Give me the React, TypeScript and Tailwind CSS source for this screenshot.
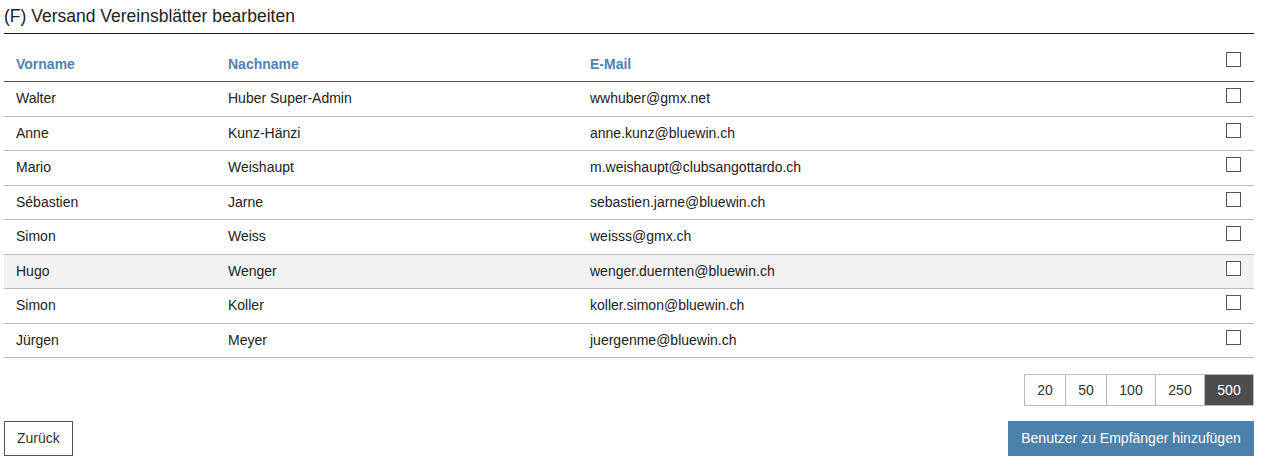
import React from 'react';

const rows = [
  { first: 'Walter', last: 'Huber Super-Admin', mail: 'wwhuber@gmx.net' },
  { first: 'Anne', last: 'Kunz-Hänzi', mail: 'anne.kunz@bluewin.ch' },
  { first: 'Mario', last: 'Weishaupt', mail: 'm.weishaupt@clubsangottardo.ch' },
  { first: 'Sébastien', last: 'Jarne', mail: 'sebastien.jarne@bluewin.ch' },
  { first: 'Simon', last: 'Weiss', mail: 'weisss@gmx.ch' },
  { first: 'Hugo', last: 'Wenger', mail: 'wenger.duernten@bluewin.ch', hover: true },
  { first: 'Simon', last: 'Koller', mail: 'koller.simon@bluewin.ch' },
  { first: 'Jürgen', last: 'Meyer', mail: 'juergenme@bluewin.ch' },
];

const pageSizes = [
  { label: '20', w: 'w-[40px]' },
  { label: '50', w: 'w-[41px]' },
  { label: '100', w: 'w-[49px]' },
  { label: '250', w: 'w-[49px]' },
  { label: '500', w: 'w-[49px]' },
];

const Box = () => (
  <span className="block w-[15px] h-[15px] border border-[#555] bg-white" />
);

export default function App() {
  return (
    <div className="w-[1254px] pl-1 text-[14px] text-[#222]" style={{ fontFamily: '"Liberation Sans", Arial, sans-serif' }}>
      <h2 className="pt-[6px] pb-[7px] text-[17.5px] leading-[20px] border-b border-[#222]">
        (F) Versand Vereinsblätter bearbeiten
      </h2>

      <div className="flex h-[48px] border-b border-[#555] text-[14px] font-bold text-[#4f84b0]">
        <div className="w-[212px] pl-3 flex items-end pb-[6px]">Vorname</div>
        <div className="w-[362px] pl-3 flex items-end pb-[6px]">Nachname</div>
        <div className="flex-1 pl-3 flex items-end pb-[6px]">E-Mail</div>
        <div className="w-[28px] pt-[18px]"><Box /></div>
      </div>

      {rows.map((r, i) => (
        <div key={i} className={`flex h-[34.5px] border-b border-[#bbb] ${r.hover ? 'bg-[#f2f2f2]' : ''}`}>
          <div className="w-[212px] pl-3 flex items-center">{r.first}</div>
          <div className="w-[362px] pl-3 flex items-center">{r.last}</div>
          <div className="flex-1 pl-3 flex items-center">{r.mail}</div>
          <div className="w-[28px] pt-[6px]"><Box /></div>
        </div>
      ))}

      <div className="flex justify-end mt-[16px]">
        <div className="flex border border-[#bbb]">
          {pageSizes.map((s, i) => (
            <span
              key={s.label}
              className={`h-[30px] flex items-center justify-center ${s.w} ${i > 0 ? 'border-l border-[#bbb]' : ''} ${s.label === '500' ? 'bg-[#4d4d4d] text-white' : 'text-[#333]'}`}
            >
              {s.label}
            </span>
          ))}
        </div>
      </div>

      <div className="flex justify-between items-center mt-[15px]">
        <button className="h-[35px] px-3 border border-[#555] text-[#333] bg-white">Zurück</button>
        <button className="h-[35px] w-[246px] bg-[#4b81ab] text-white">Benutzer zu Empfänger hinzufügen</button>
      </div>
    </div>
  );
}
